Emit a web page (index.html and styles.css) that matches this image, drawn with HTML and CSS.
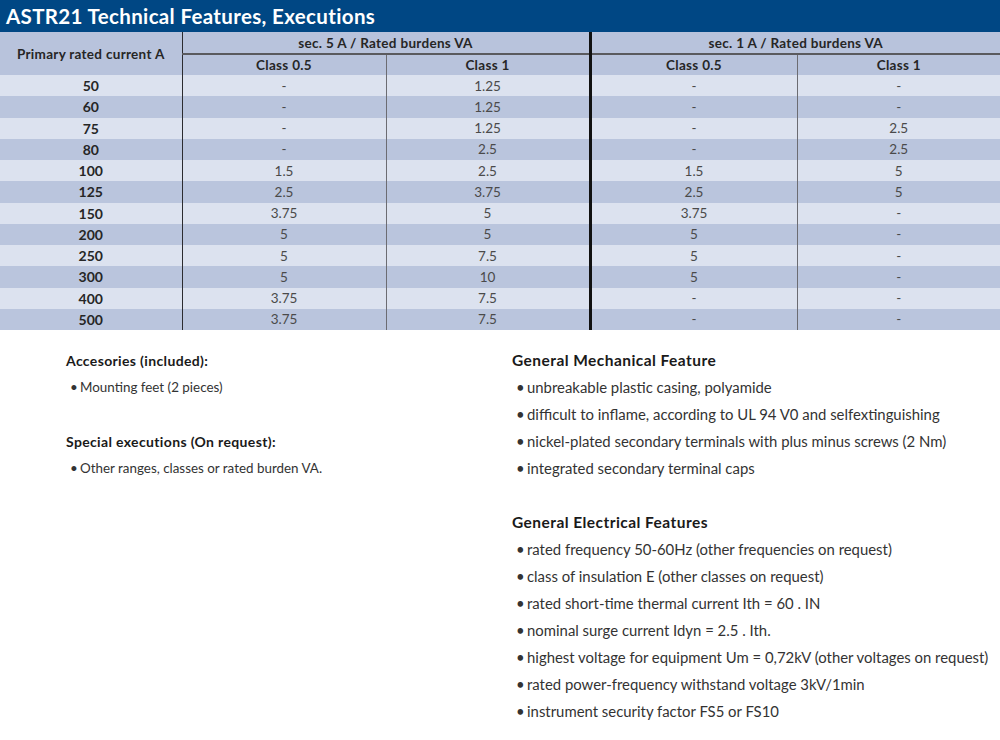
FILE: index.html
```html
<!DOCTYPE html>
<html>
<head>
<meta charset="utf-8">
<link rel="stylesheet" href="styles.css">
</head>
<body>
<div class="titlebar">ASTR21 Technical Features, Executions</div>
<table class="spec">
  <colgroup>
    <col class="c1"><col class="c2"><col class="c3"><col class="c4"><col class="c5">
  </colgroup>
  <thead>
    <tr class="h1">
      <th rowspan="2" class="first">Primary rated current A</th>
      <th colspan="2" class="grp">sec. 5 A / Rated burdens VA</th>
      <th colspan="2" class="grp thick">sec. 1 A / Rated burdens VA</th>
    </tr>
    <tr class="h2">
      <th>Class 0.5</th>
      <th class="thin">Class 1</th>
      <th class="thick">Class 0.5</th>
      <th class="thin">Class 1</th>
    </tr>
  </thead>
  <tbody>
    <tr class="lt"><th>50</th><td>-</td><td class="thin">1.25</td><td class="thick">-</td><td class="thin">-</td></tr>
    <tr class="dk"><th>60</th><td>-</td><td class="thin">1.25</td><td class="thick">-</td><td class="thin">-</td></tr>
    <tr class="lt"><th>75</th><td>-</td><td class="thin">1.25</td><td class="thick">-</td><td class="thin">2.5</td></tr>
    <tr class="dk"><th>80</th><td>-</td><td class="thin">2.5</td><td class="thick">-</td><td class="thin">2.5</td></tr>
    <tr class="lt"><th>100</th><td>1.5</td><td class="thin">2.5</td><td class="thick">1.5</td><td class="thin">5</td></tr>
    <tr class="dk"><th>125</th><td>2.5</td><td class="thin">3.75</td><td class="thick">2.5</td><td class="thin">5</td></tr>
    <tr class="lt"><th>150</th><td>3.75</td><td class="thin">5</td><td class="thick">3.75</td><td class="thin">-</td></tr>
    <tr class="dk"><th>200</th><td>5</td><td class="thin">5</td><td class="thick">5</td><td class="thin">-</td></tr>
    <tr class="lt"><th>250</th><td>5</td><td class="thin">7.5</td><td class="thick">5</td><td class="thin">-</td></tr>
    <tr class="dk"><th>300</th><td>5</td><td class="thin">10</td><td class="thick">5</td><td class="thin">-</td></tr>
    <tr class="lt"><th>400</th><td>3.75</td><td class="thin">7.5</td><td class="thick">-</td><td class="thin">-</td></tr>
    <tr class="dk"><th>500</th><td>3.75</td><td class="thin">7.5</td><td class="thick">-</td><td class="thin">-</td></tr>
  </tbody>
</table>
<div class="notes">
  <div class="col left">
    <h3>Accesories (included):</h3>
    <ul><li>Mounting feet (2 pieces)</li></ul>
    <h3 class="gap">Special executions (On request):</h3>
    <ul><li>Other ranges, classes or rated burden VA.</li></ul>
  </div>
  <div class="col right">
    <h3>General Mechanical Feature</h3>
    <ul>
      <li>unbreakable plastic casing, polyamide</li>
      <li>difficult to inflame, according to UL 94 V0 and selfextinguishing</li>
      <li>nickel-plated secondary terminals with plus minus screws (2 Nm)</li>
      <li>integrated secondary terminal caps</li>
    </ul>
    <h3 class="gap">General Electrical Features</h3>
    <ul>
      <li>rated frequency 50-60Hz (other frequencies on request)</li>
      <li>class of insulation E (other classes on request)</li>
      <li>rated short-time thermal current Ith = 60 . IN</li>
      <li>nominal surge current Idyn = 2.5 . Ith.</li>
      <li>highest voltage for equipment Um = 0,72kV (other voltages on request)</li>
      <li>rated power-frequency withstand voltage 3kV/1min</li>
      <li>instrument security factor FS5 or FS10</li>
    </ul>
  </div>
</div>
</body>
</html>
```

FILE: styles.css
```css
* { box-sizing: border-box; }
html, body { margin: 0; padding: 0; background: #fff; }
body {
  width: 1000px;
  font-family: Lato, "Open Sans", "DejaVu Sans", sans-serif;
  color: #2a2a2a;
}
.titlebar {
  height: 32px;
  background: #004784;
  color: #fff;
  font-weight: 700;
  font-size: 20.5px;
  line-height: 32px;
  padding-left: 6px;
  letter-spacing: 0.35px;
}
.spec {
  width: 1000px;
  border-collapse: collapse;
  table-layout: fixed;
  font-size: 13px;
}
.c1 { width: 182px; }
.c2 { width: 204px; }
.c3 { width: 204px; }
.c4 { width: 207px; }
.c5 { width: 203px; }
.spec th, .spec td {
  padding: 0;
  text-align: center;
  vertical-align: middle;
  height: 21.25px;
}
.spec thead th {
  background: #b8c3dc;
  font-weight: 700;
  font-size: 13.5px;
  letter-spacing: 0.3px;
  color: #262626;
}
.spec .h1 th { height: 22px; }
.spec .h1 .grp { border-bottom: 2px solid #5a5a5e; }
.spec .h2 th { height: 21px; }
.spec .first { border-right: 1px solid #2c2c30; }
.spec tbody th {
  font-weight: 700;
  font-size: 14px;
  color: #262626;
  border-right: 1px solid #2c2c30;
}
.spec tbody td { color: #4a4a4a; font-size: 13.5px; }
.spec .thin { border-left: 1px solid #6c6c72; }
.spec .thick { border-left: 3px solid #111; }
.spec .lt th, .spec .lt td { background: #dce2ef; }
.spec .dk th, .spec .dk td { background: #bac5dd; }

.notes {
  display: grid;
  grid-template-columns: 446px 1fr;
  padding-left: 66px;
  padding-top: 17px;
}
.notes h3 {
  margin: 0;
  font-weight: 700;
  line-height: 27px;
  color: #1a1a1a;
}
.notes h3.gap { margin-top: 27px; }
.notes ul { list-style: none; margin: 0; padding: 0; }
.notes li { position: relative; line-height: 27px; }
.notes li::before {
  content: "•";
  position: absolute;
  left: 4px;
  top: 0;
}
.left h3 { font-size: 14px; letter-spacing: 0.35px; }
.left li { font-size: 13.4px; padding-left: 14px; color: #333; }
.right h3 { font-size: 15.5px; letter-spacing: 0.45px; }
.right li { font-size: 14.9px; padding-left: 15px; color: #333; }
```
